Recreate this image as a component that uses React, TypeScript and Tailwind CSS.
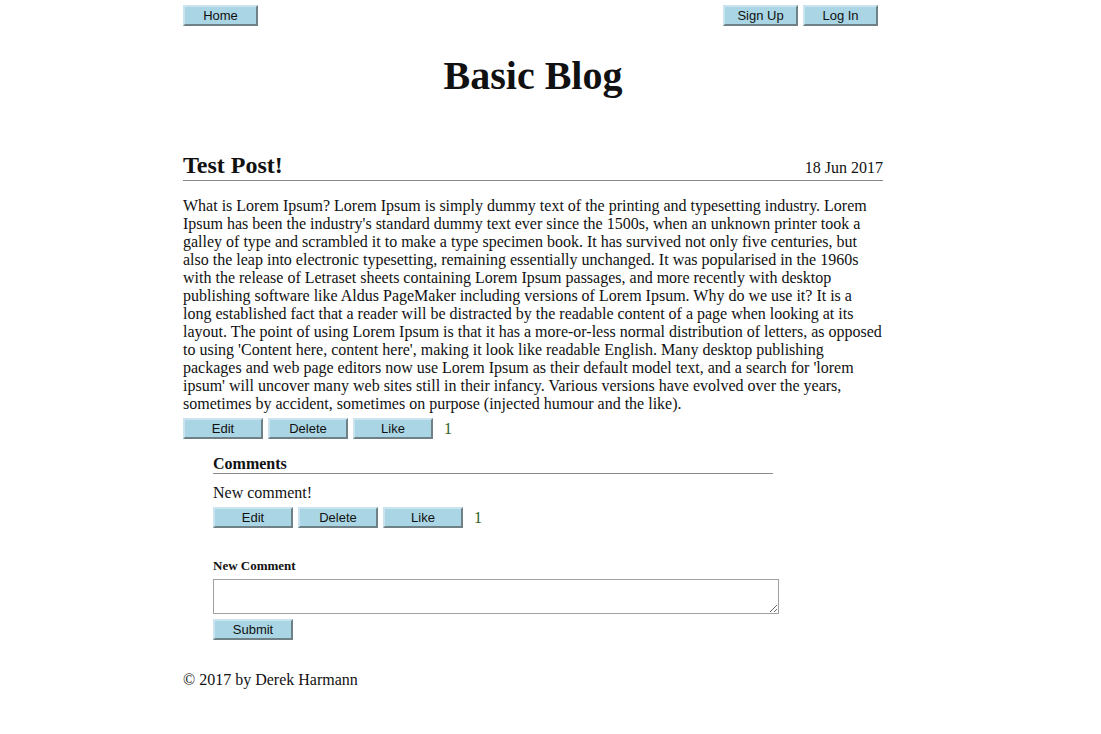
import React from "react";

const postText =
  "What is Lorem Ipsum? Lorem Ipsum is simply dummy text of the printing and typesetting industry. Lorem Ipsum has been the industry's standard dummy text ever since the 1500s, when an unknown printer took a galley of type and scrambled it to make a type specimen book. It has survived not only five centuries, but also the leap into electronic typesetting, remaining essentially unchanged. It was popularised in the 1960s with the release of Letraset sheets containing Lorem Ipsum passages, and more recently with desktop publishing software like Aldus PageMaker including versions of Lorem Ipsum. Why do we use it? It is a long established fact that a reader will be distracted by the readable content of a page when looking at its layout. The point of using Lorem Ipsum is that it has a more-or-less normal distribution of letters, as opposed to using 'Content here, content here', making it look like readable English. Many desktop publishing packages and web page editors now use Lorem Ipsum as their default model text, and a search for 'lorem ipsum' will uncover many web sites still in their infancy. Various versions have evolved over the years, sometimes by accident, sometimes on purpose (injected humour and the like).";

function Btn({ label, wide = false }: { label: string; wide?: boolean }) {
  return (
    <button
      className={`${wide ? "w-[80px]" : "w-[75px]"} h-[21px] bg-[#a9d5e4] border-2 border-t-[#c9e4ee] border-l-[#c9e4ee] border-b-[#6f8086] border-r-[#6f8086] font-['Liberation_Sans',Arial,sans-serif] text-[13px] leading-none text-[#111]`}
    >
      {label}
    </button>
  );
}

function Actions({ likes }: { likes: number }) {
  return (
    <div className="flex items-center gap-[5px]">
      <Btn label="Edit" wide />
      <Btn label="Delete" wide />
      <Btn label="Like" wide />
      <span className="ml-[6px] text-[16px] leading-[18px] text-[#2f5f24]">{likes}</span>
    </div>
  );
}

export default function App() {
  return (
    <div className="min-h-screen bg-white font-['Liberation_Serif','Times_New_Roman',serif] text-[#111]">
      <div className="ml-[183px] w-[700px] pt-[5px] pb-10">
        {/* nav */}
        <nav className="flex justify-between pr-[5px]">
          <Btn label="Home" />
          <div className="flex gap-[5px]">
            <Btn label="Sign Up" />
            <Btn label="Log In" />
          </div>
        </nav>

        <h1 className="mt-[27px] text-center text-[40px] leading-[46px] font-bold">Basic Blog</h1>

        {/* post */}
        <div className="mt-[52px] flex items-baseline justify-between border-b border-[#8a8a8a] pb-[1px]">
          <h2 className="text-[24px] leading-[28px] font-bold">Test Post!</h2>
          <span className="text-[16px] leading-[18px]">18 Jun 2017</span>
        </div>
        <p className="mt-[16px] text-[16px] leading-[18px]">{postText}</p>
        <div className="mt-[5px]">
          <Actions likes={1} />
        </div>

        {/* comments */}
        <div className="ml-[30px] w-[566px]">
          <h3 className="mt-[16px] w-[560px] border-b border-[#8a8a8a] text-[16px] leading-[18px] font-bold">
            Comments
          </h3>
          <p className="mt-[10px] text-[16px] leading-[18px]">New comment!</p>
          <div className="mt-[5px]">
            <Actions likes={1} />
          </div>

          <label className="mt-[30px] block text-[13px] leading-[15px] font-bold">New Comment</label>
          <textarea className="mt-[6px] block h-[35px] w-[566px] border border-[#a0a0a0] bg-white" />
          <div className="mt-[3px]">
            <Btn label="Submit" wide />
          </div>
        </div>

        <p className="mt-[30px] text-[16px] leading-[18px]">© 2017 by Derek Harmann</p>
      </div>
    </div>
  );
}
